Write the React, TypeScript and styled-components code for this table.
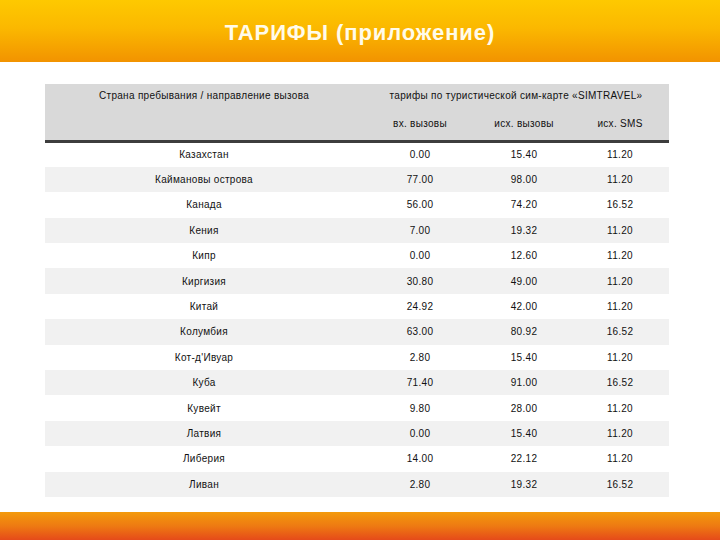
import React from 'react';
import styled, { createGlobalStyle } from 'styled-components';

const GlobalStyle = createGlobalStyle`
  html, body {
    margin: 0;
    padding: 0;
    background: #ffffff;
  }
  body {
    font-family: 'Liberation Sans', Arial, sans-serif;
  }
`;

interface Tariff {
  country: string;
  incoming: string;
  outgoing: string;
  sms: string;
}

const tariffs: Tariff[] = [
  { country: 'Казахстан', incoming: '0.00', outgoing: '15.40', sms: '11.20' },
  { country: 'Каймановы острова', incoming: '77.00', outgoing: '98.00', sms: '11.20' },
  { country: 'Канада', incoming: '56.00', outgoing: '74.20', sms: '16.52' },
  { country: 'Кения', incoming: '7.00', outgoing: '19.32', sms: '11.20' },
  { country: 'Кипр', incoming: '0.00', outgoing: '12.60', sms: '11.20' },
  { country: 'Киргизия', incoming: '30.80', outgoing: '49.00', sms: '11.20' },
  { country: 'Китай', incoming: '24.92', outgoing: '42.00', sms: '11.20' },
  { country: 'Колумбия', incoming: '63.00', outgoing: '80.92', sms: '16.52' },
  { country: 'Кот-д\'Ивуар', incoming: '2.80', outgoing: '15.40', sms: '11.20' },
  { country: 'Куба', incoming: '71.40', outgoing: '91.00', sms: '16.52' },
  { country: 'Кувейт', incoming: '9.80', outgoing: '28.00', sms: '11.20' },
  { country: 'Латвия', incoming: '0.00', outgoing: '15.40', sms: '11.20' },
  { country: 'Либерия', incoming: '14.00', outgoing: '22.12', sms: '11.20' },
  { country: 'Ливан', incoming: '2.80', outgoing: '19.32', sms: '16.52' },
];

const Styled = {
  Page: styled.div`
    width: 720px;
    height: 540px;
    display: flex;
    flex-direction: column;
    overflow: hidden;
  `,
  Banner: styled.header`
    height: 62px;
    display: flex;
    align-items: center;
    justify-content: center;
    background: linear-gradient(to bottom, #fec900 0%, #fbb800 45%, #f29300 100%);
  `,
  Title: styled.h1`
    margin: 4px 0 0 0;
    font-family: 'Liberation Sans', Arial, sans-serif;
    font-size: 22px;
    font-weight: 700;
    color: #fffbea;
    letter-spacing: 0.9px;
  `,
  Body: styled.main`
    flex: 1;
    padding: 22px 51px 0 45px;
  `,
  Table: styled.table`
    width: 624px;
    border-collapse: collapse;
    table-layout: fixed;
    font-size: 10px;
    color: #111111;
  `,
  HeadCell: styled.th<{ height: number }>`
    background: #d9d9d9;
    font-weight: 400;
    height: ${(p) => p.height}px;
    padding: 0;
    text-align: center;
    vertical-align: middle;
    letter-spacing: 0.3px;
  `,
  HeadRow: styled.tr<{ divider?: boolean }>`
    border-bottom: ${(p) => (p.divider ? '3px solid #3d3d3d' : 'none')};
  `,
  Row: styled.tr<{ shaded: boolean }>`
    background: ${(p) => (p.shaded ? '#f1f1f1' : '#ffffff')};
    height: 25.4px;
  `,
  Cell: styled.td`
    padding: 0;
    text-align: center;
    vertical-align: middle;
    letter-spacing: 0.3px;
  `,
  Footer: styled.footer`
    height: 28px;
    background: linear-gradient(to bottom, #f39a0c 0%, #ee7a12 50%, #e54a1a 100%);
  `,
};

export default function App() {
  return (
    <>
      <GlobalStyle />
      <Styled.Page>
        <Styled.Banner>
          <Styled.Title>ТАРИФЫ (приложение)</Styled.Title>
        </Styled.Banner>
        <Styled.Body>
          <Styled.Table>
            <colgroup>
              <col style={{ width: 318 }} />
              <col style={{ width: 114 }} />
              <col style={{ width: 94 }} />
              <col style={{ width: 98 }} />
            </colgroup>
            <thead>
              <Styled.HeadRow>
                <Styled.HeadCell height={23}>
                  Страна пребывания / направление вызова
                </Styled.HeadCell>
                <Styled.HeadCell height={23} colSpan={3}>
                  тарифы по туристической сим-карте «SIMTRAVEL»
                </Styled.HeadCell>
              </Styled.HeadRow>
              <Styled.HeadRow divider>
                <Styled.HeadCell height={33} />
                <Styled.HeadCell height={33}>вх. вызовы</Styled.HeadCell>
                <Styled.HeadCell height={33}>исх. вызовы</Styled.HeadCell>
                <Styled.HeadCell height={33}>исх. SMS</Styled.HeadCell>
              </Styled.HeadRow>
            </thead>
            <tbody>
              {tariffs.map((t, i) => (
                <Styled.Row key={t.country} shaded={i % 2 === 1}>
                  <Styled.Cell>{t.country}</Styled.Cell>
                  <Styled.Cell>{t.incoming}</Styled.Cell>
                  <Styled.Cell>{t.outgoing}</Styled.Cell>
                  <Styled.Cell>{t.sms}</Styled.Cell>
                </Styled.Row>
              ))}
            </tbody>
          </Styled.Table>
        </Styled.Body>
        <Styled.Footer />
      </Styled.Page>
    </>
  );
}
